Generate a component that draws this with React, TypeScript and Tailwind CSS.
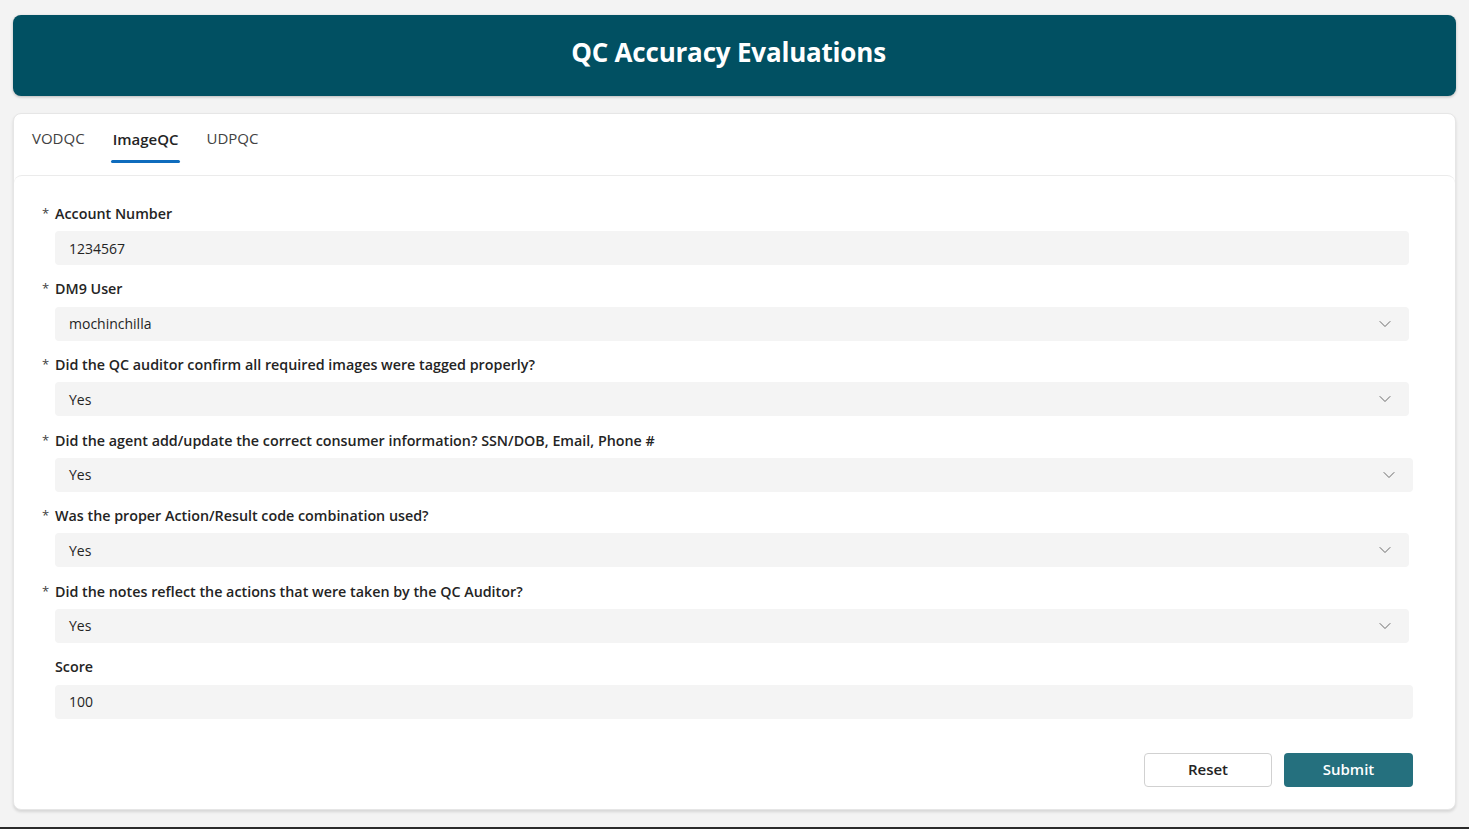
import { ChevronDown } from 'lucide-react';

const questions = [
  { label: 'DM9 User', value: 'mochinchilla', select: true, wide: false },
  { label: 'Did the QC auditor confirm all required images were tagged properly?', value: 'Yes', select: true, wide: false },
  { label: 'Did the agent add/update the correct consumer information? SSN/DOB, Email, Phone #', value: 'Yes', select: true, wide: true },
  { label: 'Was the proper Action/Result code combination used?', value: 'Yes', select: true, wide: false },
  { label: 'Did the notes reflect the actions that were taken by the QC Auditor?', value: 'Yes', select: true, wide: false },
];

function Field({ label, value, select, wide, required = true }: { label: string; value: string; select?: boolean; wide?: boolean; required?: boolean }) {
  return (
    <div className="mb-[12.6px]">
      <div className="flex h-5 items-center pt-[3px] text-[14.3px] font-semibold text-[#242424]">
        <span className="w-[13px] text-[13px] font-normal text-[#424242]">{required ? '*' : ''}</span>
        <span>{label}</span>
      </div>
      <div
        className={`mt-[9px] ml-[13px] flex h-[34px] items-center justify-between rounded-[4px] bg-[#f4f4f4] pl-[14px] pr-[14px] text-[14px] text-[#242424] ${
          wide ? '' : 'mr-[4px]'
        }`}
      >
        <span>{value}</span>
        {select && <ChevronDown className="h-[20px] w-[20px] text-[#5c5c5c]" strokeWidth={1.1} />}
      </div>
    </div>
  );
}

export default function App() {
  return (
    <div className="flex h-[829px] flex-col bg-[#f3f3f3] font-['Open_Sans','Noto_Sans',sans-serif]">
      <div className="flex-1 px-[13px] pt-[15px]">
        {/* Title banner */}
        <div className="flex h-[81px] items-center justify-center rounded-[8px] bg-[#015062] pr-[12px] pb-[6px] shadow-[0_1px_3px_rgba(0,0,0,0.25)]">
          <h1 className="text-[26px] font-bold tracking-[-0.2px] text-white">QC Accuracy Evaluations</h1>
        </div>

        {/* Main card */}
        <div className="mt-[17px] rounded-[8px] border border-[#e6e6e6] bg-white shadow-[0_2px_3px_rgba(0,0,0,0.12)]">
          <div className="flex h-[61px] items-center gap-[8px] px-[10px] pb-[12px]">
            <button className="px-[8px] text-[15px] text-[#424242]">VODQC</button>
            <div className="relative mx-[10px] px-[2px]">
              <button className="text-[15px] font-semibold text-[#242424]">ImageQC</button>
              <div className="absolute left-0 right-0 top-[33px] h-[3px] rounded-full bg-[#0f6cbd]" />
            </div>
            <button className="px-[8px] text-[15px] text-[#424242]">UDPQC</button>
          </div>

          <div className="rounded-[8px] border-t border-[#ebebeb] pl-[28px] pr-[42px] pt-[26px] pb-[22px]">
            <Field label="Account Number" value="1234567" />
            {questions.map((q) => (
              <Field key={q.label} label={q.label} value={q.value} select={q.select} wide={q.wide} />
            ))}
            <Field label="Score" value="100" wide required={false} />

            <div className="mt-[34px] flex justify-end gap-[12px]">
              <button className="h-[34px] w-[128px] rounded-[4px] border border-[#d1d1d1] bg-white text-[15px] font-semibold text-[#242424]">
                Reset
              </button>
              <button className="h-[34px] w-[129px] rounded-[4px] bg-[#25707e] text-[15px] font-semibold text-white">
                Submit
              </button>
            </div>
          </div>
        </div>
      </div>
      <div className="h-[2px] bg-[#2b2b2b]" />
    </div>
  );
}
